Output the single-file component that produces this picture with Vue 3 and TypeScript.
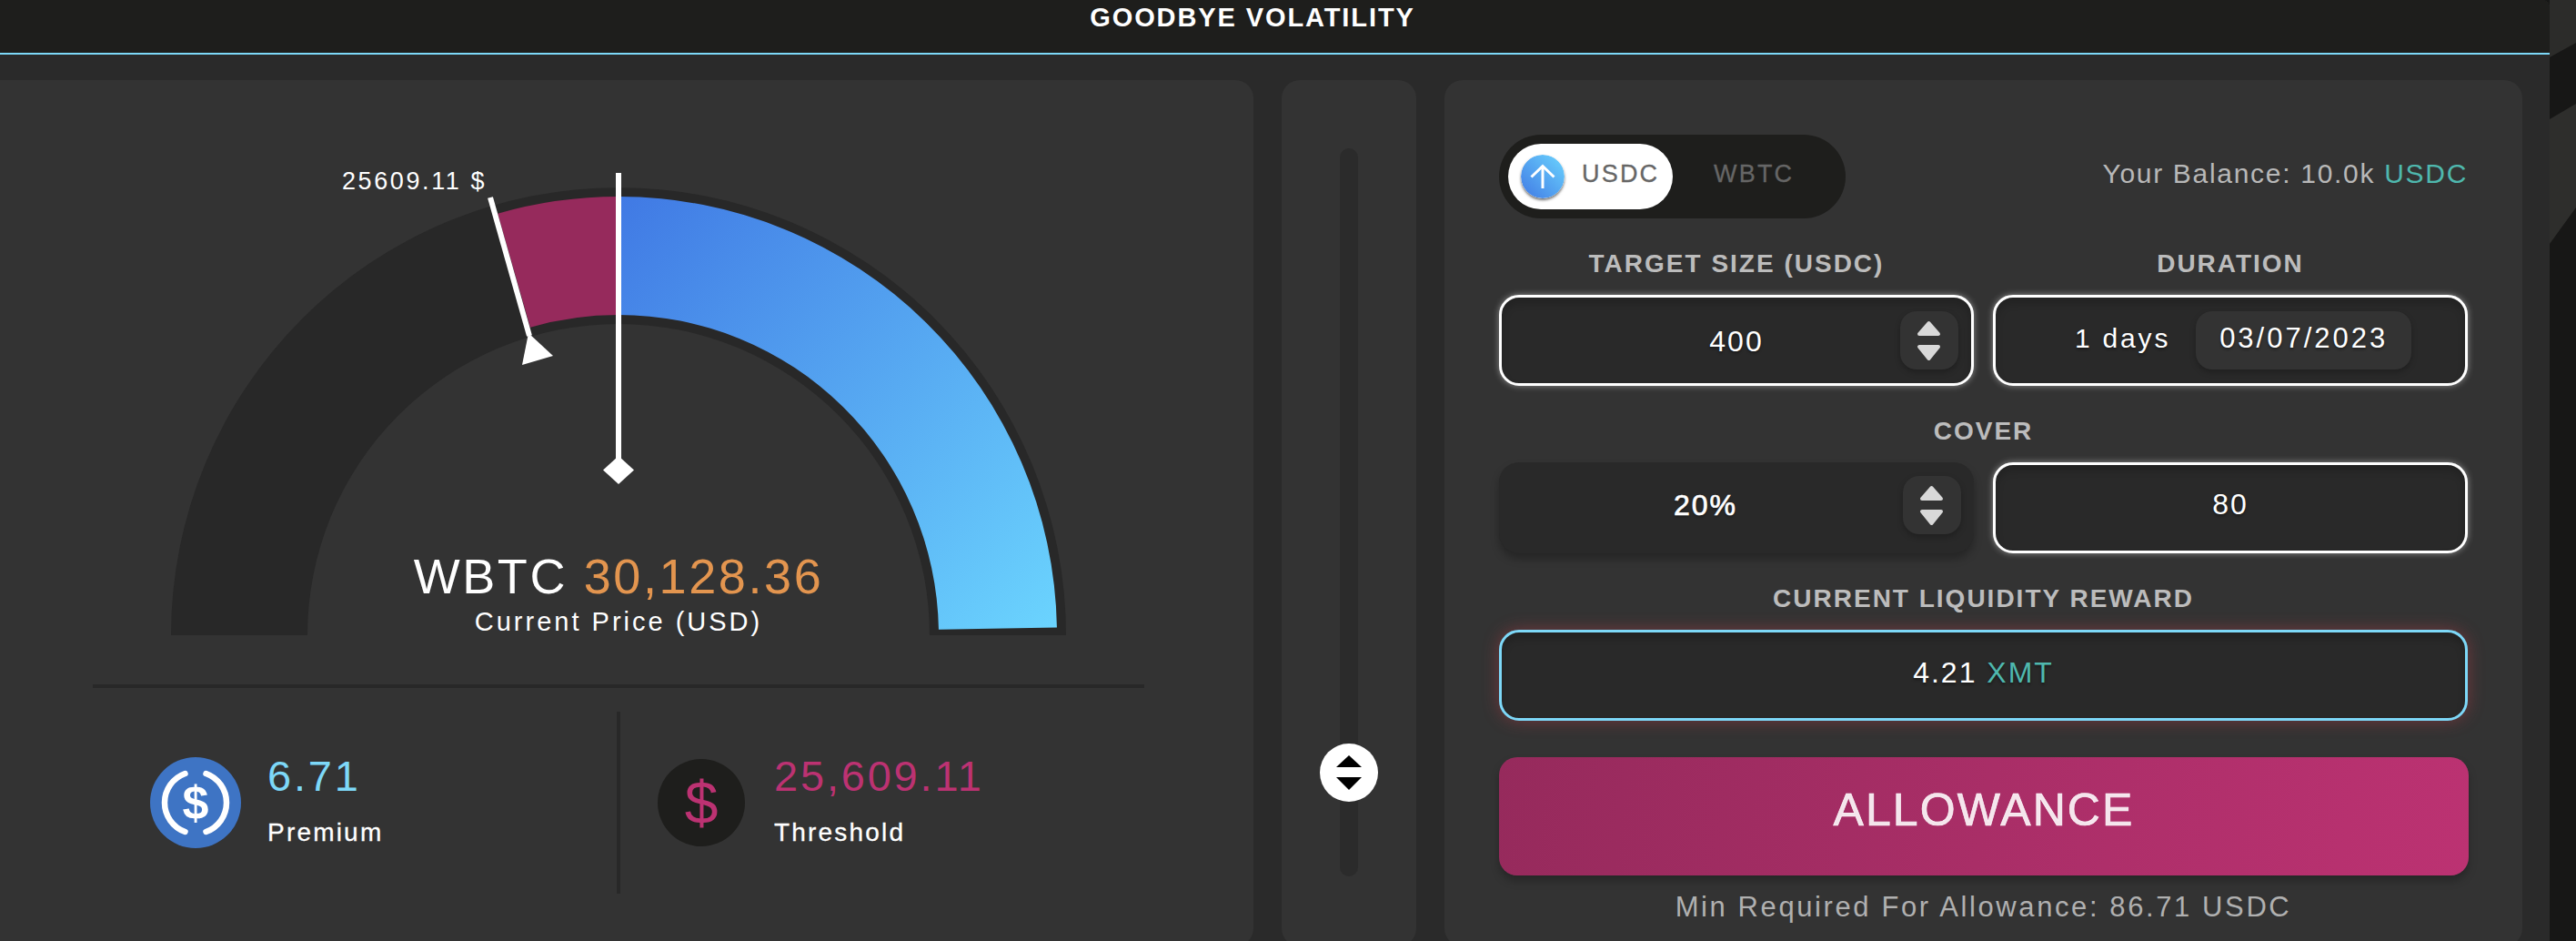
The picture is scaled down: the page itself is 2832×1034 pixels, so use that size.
<script setup lang="ts">
const cx = 680;
const cy = 698;

// angles are degrees from the top of the dial
const point = (r: number, deg: number) => {
  const a = (deg * Math.PI) / 180;
  return `${(cx + r * Math.sin(a)).toFixed(2)} ${(cy - r * Math.cos(a)).toFixed(2)}`;
};

const arc = (inner: number, outer: number, from: number, to: number) =>
  `M${point(outer, from)} A${outer} ${outer} 0 0 1 ${point(outer, to)} L${point(inner, to)} A${inner} ${inner} 0 0 0 ${point(inner, from)} Z`;

const trackArc = arc(342, 492, -90, 90);
const lossArc = arc(352, 482, -16, 0);
const gainArc = arc(352, 482, 0, 89);
</script>

<template>
  <div class="page">
    <div class="main">
      <header class="topbar">GOODBYE VOLATILITY</header>
      <div class="panels">
        <section class="card gauge-card">
          <div class="gauge">
            <svg class="dial" width="1100" height="530" viewBox="130 180 1100 530">
              <defs>
                <linearGradient id="gain" gradientUnits="userSpaceOnUse" x1="680" y1="216" x2="1162" y2="690">
                  <stop offset="0" stop-color="#4079e4" />
                  <stop offset="1" stop-color="#6bd4fe" />
                </linearGradient>
              </defs>
              <path :d="trackArc" fill="#282828" />
              <path :d="lossArc" fill="#962a5c" />
              <path :d="gainArc" fill="url(#gain)" />
              <line x1="539" y1="217" x2="582" y2="369" stroke="#fff" stroke-width="6" />
              <polygon points="581,366 608,391 574,401" fill="#fff" />
              <line x1="680" y1="190" x2="680" y2="505" stroke="#fff" stroke-width="6" />
              <polygon points="680,501 697,516.5 680,532 663,516.5" fill="#fff" />
            </svg>
            <span class="threshold-tag">25609.11 $</span>
            <div class="gauge-caption">
              <div class="price">WBTC <span class="orange">30,128.36</span></div>
              <div class="price-sub">Current Price (USD)</div>
            </div>
          </div>
          <div class="divider"></div>
          <div class="stats">
            <div class="stat stat-premium">
              <svg class="stat-icon" width="100" height="100" viewBox="-50 -50 100 100">
                <circle r="50" fill="#3e74c4" />
                <path d="M-11.5 -32 A34 34 0 0 0 -11.5 32 M11.5 -32 A34 34 0 0 1 11.5 32" fill="none" stroke="#fff" stroke-width="6.5" stroke-linecap="round" />
                <text class="usdc-sign" x="0" y="18" text-anchor="middle">$</text>
              </svg>
              <div class="stat-text">
                <div class="stat-value cyan">6.71</div>
                <div class="stat-label">Premium</div>
              </div>
            </div>
            <div class="stat stat-threshold">
              <div class="dollar-icon">$</div>
              <div class="stat-text">
                <div class="stat-value pink">25,609.11</div>
                <div class="stat-label">Threshold</div>
              </div>
            </div>
          </div>
        </section>

        <section class="card slider-card">
          <div class="track">
            <div class="thumb">
              <svg width="64" height="64" viewBox="0 0 64 64">
                <polygon points="32,13 46,26 18,26" fill="#000" />
                <polygon points="18,37 46,37 32,51" fill="#000" />
              </svg>
            </div>
          </div>
        </section>

        <section class="card form-card">
          <div class="toggle-row">
            <div class="toggle">
              <div class="toggle-on">
                <svg class="toggle-icon" width="48" height="48" viewBox="0 0 48 48">
                  <defs>
                    <linearGradient id="knob" x1="0" y1="1" x2="1" y2="0">
                      <stop offset="0" stop-color="#4079e4" />
                      <stop offset="1" stop-color="#6bd4fe" />
                    </linearGradient>
                  </defs>
                  <circle cx="24" cy="24" r="24" fill="url(#knob)" />
                  <path d="M24 37 V12.5 M11.5 24.5 L24 12.5 L36.5 24.5" fill="none" stroke="#fff" stroke-width="3" />
                </svg>
                <span>USDC</span>
              </div>
              <span class="toggle-off">WBTC</span>
            </div>
            <div class="balance">Your Balance: 10.0k <span class="teal">USDC</span></div>
          </div>

          <div class="field-grid">
            <div class="field-label">TARGET SIZE (USDC)</div>
            <div class="field-label">DURATION</div>
            <div class="box outlined target">
              400
              <div class="spinner">
                <svg width="64" height="64" viewBox="0 0 64 64">
                  <polygon points="31.5,13 42,25 21,25" fill="#d8d8d8" stroke="#d8d8d8" stroke-width="4" stroke-linejoin="round" />
                  <polygon points="21,39 42,39 31.5,52" fill="#d8d8d8" stroke="#d8d8d8" stroke-width="4" stroke-linejoin="round" />
                </svg>
              </div>
            </div>
            <div class="box outlined duration">
              <span class="days">1 days</span>
              <span class="date-chip">03/07/2023</span>
            </div>

            <div class="field-label wide cover-label">COVER</div>
            <div class="box raised">
              <span class="percent">20%</span>
              <div class="spinner">
                <svg width="64" height="64" viewBox="0 0 64 64">
                  <polygon points="31.5,13 42,25 21,25" fill="#d8d8d8" stroke="#d8d8d8" stroke-width="4" stroke-linejoin="round" />
                  <polygon points="21,39 42,39 31.5,52" fill="#d8d8d8" stroke="#d8d8d8" stroke-width="4" stroke-linejoin="round" />
                </svg>
              </div>
            </div>
            <div class="box outlined cover-amount">80</div>

            <div class="field-label wide cover-label">CURRENT LIQUIDITY REWARD</div>
            <div class="box reward wide">4.21&nbsp;<span class="teal">XMT</span></div>
          </div>

          <button class="allowance">ALLOWANCE</button>
          <div class="min-note">Min Required For Allowance: 86.71 USDC</div>
        </section>
      </div>
    </div>

    <div class="edge">
      <svg width="29" height="1034" viewBox="0 0 29 1034">
        <rect width="29" height="1034" fill="#171716" />
        <polygon points="0,0 29,0 29,47 0,63" fill="#2c2c2a" />
        <polygon points="0,131 29,114 29,228 0,268" fill="#2e2e2c" />
      </svg>
    </div>
  </div>
</template>

<style>
html,
body {
  margin: 0;
  background: #171716;
}
</style>

<style scoped>
.page {
  display: flex;
  width: 2832px;
  height: 1034px;
  overflow: hidden;
  font-family: "Liberation Sans", Arial, sans-serif;
  color: #fff;
}

.main {
  flex: none;
  width: 2803px;
  background: #2a2a2a;
  border-top-right-radius: 8px;
  overflow: hidden;
}

.edge {
  flex: none;
  width: 29px;
}

.edge svg {
  display: block;
}

.topbar {
  box-sizing: border-box;
  height: 60px;
  padding: 4px 49px 0 0;
  background: #1e1e1c;
  border-bottom: 2px solid #7dd8f8;
  font-size: 29px;
  line-height: 30px;
  font-weight: 700;
  letter-spacing: 1.9px;
  text-align: center;
}

.panels {
  display: flex;
  gap: 31px;
  margin: 28px 0 0 -30px;
}

.card {
  flex: none;
  box-sizing: border-box;
  height: 952px;
  background: #333;
  border-radius: 20px;
}

.gauge-card {
  width: 1408px;
  padding-top: 92px;
}

.gauge {
  position: relative;
  width: 1100px;
  height: 530px;
  margin-left: 160px;
}

.dial {
  display: block;
}

.threshold-tag {
  position: absolute;
  left: 246px;
  top: 3px;
  font-size: 27px;
  line-height: 32px;
  letter-spacing: 2.6px;
  white-space: nowrap;
}

.gauge-caption {
  position: absolute;
  left: 0;
  right: 0;
  top: 423px;
  text-align: center;
}

.price {
  font-size: 54px;
  line-height: 60px;
  letter-spacing: 2.6px;
}

.orange {
  color: #e3954f;
}

.price-sub {
  margin-top: 3px;
  font-size: 29px;
  line-height: 34px;
  letter-spacing: 3px;
}

.divider {
  width: 1156px;
  height: 4px;
  margin: 42px 0 0 132px;
  background: #282828;
}

.stats {
  display: flex;
  width: 1156px;
  height: 200px;
  margin: 26px 0 0 132px;
}

.stat {
  display: flex;
  align-items: center;
}

.stat-premium {
  box-sizing: border-box;
  flex: none;
  width: 580px;
  padding-left: 63px;
  gap: 29px;
  border-right: 4px solid #282828;
}

.stat-threshold {
  flex: 1;
  padding-left: 41px;
  gap: 32px;
}

.stat-icon {
  flex: none;
}

.usdc-sign {
  font-size: 52px;
  font-weight: 700;
  fill: #fff;
}

.dollar-icon {
  flex: none;
  width: 96px;
  height: 96px;
  border-radius: 50%;
  background: #1e1e1c;
  color: #bc3272;
  font-size: 66px;
  line-height: 96px;
  text-align: center;
}

.stat-text {
  padding-bottom: 5px;
}

.stat-value {
  font-size: 47px;
  line-height: 52px;
  letter-spacing: 2.8px;
}

.stat-label {
  margin-top: 19px;
  font-size: 28px;
  line-height: 34px;
  letter-spacing: 2.2px;
  -webkit-text-stroke: 0.3px currentColor;
}

.cyan {
  color: #7dd8f8;
}

.pink {
  color: #bc3272;
}

.teal {
  color: #4fb8ae;
}

.slider-card {
  width: 148px;
  padding: 75px 0 0 64px;
}

.track {
  position: relative;
  width: 20px;
  height: 800px;
  border-radius: 10px;
  background: #2b2b2b;
}

.thumb {
  position: absolute;
  left: -22px;
  top: 654px;
  width: 64px;
  height: 64px;
  border-radius: 50%;
  background: #fff;
}

.thumb svg {
  display: block;
}

.form-card {
  width: 1185px;
  padding: 60px 60px 0;
}

.toggle-row {
  display: flex;
  align-items: center;
  justify-content: space-between;
}

.toggle {
  box-sizing: border-box;
  display: flex;
  align-items: center;
  width: 381px;
  height: 92px;
  padding: 0 10px;
  border-radius: 46px;
  background: #1e1e1c;
}

.toggle-on {
  box-sizing: border-box;
  display: flex;
  align-items: center;
  gap: 19px;
  width: 181px;
  height: 72px;
  padding-left: 14px;
  border-radius: 36px;
  background: #fff;
  color: #666;
}

.toggle-icon {
  flex: none;
  border-radius: 50%;
  box-shadow: 0 2px 3px rgba(0, 0, 0, 0.55);
}

.toggle-on span,
.toggle-off {
  padding-bottom: 6px;
  font-size: 27px;
  letter-spacing: 2.2px;
  -webkit-text-stroke: 0.3px currentColor;
}

.toggle-off {
  margin-left: 45px;
  color: #666;
}

.balance {
  padding-bottom: 6px;
  font-size: 30px;
  letter-spacing: 1.7px;
  color: #b8b8b8;
}

.field-grid {
  display: grid;
  grid-template-columns: 522px 522px;
  column-gap: 21px;
  margin-top: 35px;
}

.field-label {
  height: 30px;
  margin-bottom: 19px;
  font-size: 28px;
  line-height: 30px;
  font-weight: 700;
  letter-spacing: 2px;
  text-align: center;
  color: #bcbcbc;
}

.wide {
  grid-column: 1 / 3;
}

.cover-label {
  margin-top: 35px;
}

.box {
  position: relative;
  box-sizing: border-box;
  display: flex;
  align-items: center;
  justify-content: center;
  height: 100px;
  border-radius: 22px;
  background: #292929;
  font-size: 32px;
  letter-spacing: 2px;
  text-shadow: 0 2px 3px rgba(0, 0, 0, 0.4);
}

.outlined {
  border: 3px solid #fff;
  box-shadow: 0 0 7px rgba(255, 255, 255, 0.45), inset 0 6px 8px rgba(0, 0, 0, 0.18);
}

.target {
  padding-top: 2px;
}

.raised {
  padding: 0 68px 6px 0;
  box-shadow: 0 6px 10px rgba(0, 0, 0, 0.28);
}

.percent {
  -webkit-text-stroke: 0.7px currentColor;
}

.cover-amount {
  padding-bottom: 7px;
}

.reward {
  border: 3px solid #7dd8f8;
  box-shadow: 0 0 18px rgba(190, 60, 70, 0.45), inset 0 6px 8px rgba(0, 0, 0, 0.18);
  padding-bottom: 6px;
}

.spinner {
  position: absolute;
  right: 14px;
  top: 15px;
  width: 64px;
  height: 64px;
  border-radius: 18px;
  background: #333;
  box-shadow: 0 3px 6px rgba(0, 0, 0, 0.25);
}

.spinner svg {
  display: block;
}

.duration {
  justify-content: flex-start;
  padding-left: 87px;
}

.days {
  margin-right: 28px;
  font-size: 30px;
  letter-spacing: 2.8px;
  padding-bottom: 5px;
}

.date-chip {
  box-sizing: border-box;
  width: 237px;
  height: 64px;
  border-radius: 18px;
  background: #333;
  box-shadow: 0 3px 6px rgba(0, 0, 0, 0.25);
  font-size: 31px;
  line-height: 59px;
  letter-spacing: 3px;
  text-align: center;
}

.allowance {
  display: block;
  width: 1066px;
  height: 130px;
  margin-top: 40px;
  padding: 0 0 14px;
  border: none;
  border-radius: 20px;
  background: linear-gradient(100deg, #962a5c, #bc3272);
  box-shadow: 0 6px 10px rgba(0, 0, 0, 0.25);
  color: rgba(255, 255, 255, 0.88);
  font-family: inherit;
  font-size: 50px;
  letter-spacing: 2.1px;
  -webkit-text-stroke: 0.7px currentColor;
}

.min-note {
  margin-top: 20px;
  font-size: 31px;
  line-height: 30px;
  letter-spacing: 2.6px;
  text-align: center;
  color: #b0b0b0;
}
</style>
